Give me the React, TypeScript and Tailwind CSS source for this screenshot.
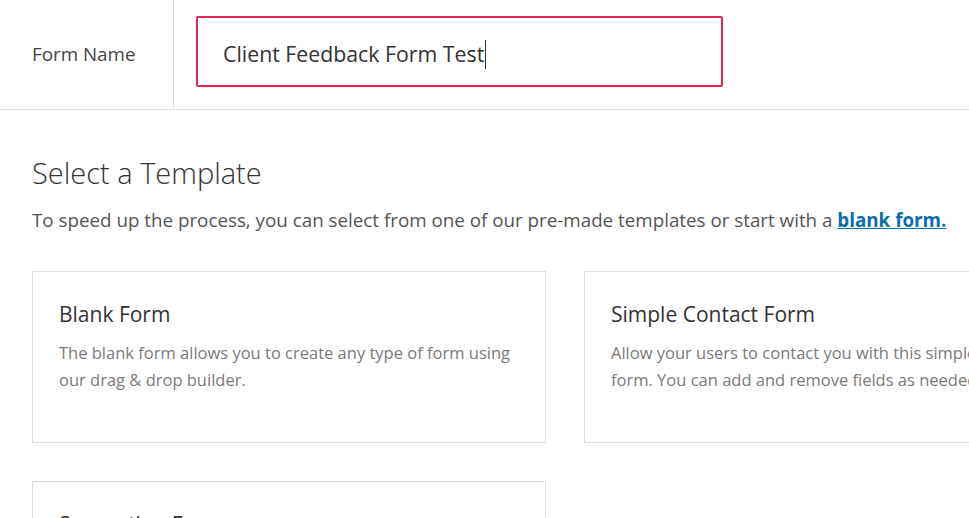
import React from "react";

interface Template {
  title: string;
  description: string;
}

const templates: Template[] = [
  {
    title: "Blank Form",
    description: "The blank form allows you to create any type of form using our drag & drop builder.",
  },
  {
    title: "Simple Contact Form",
    description:
      "Allow your users to contact you with this simple contact form. You can add and remove fields as needed.",
  },
  {
    title: "Suggestion Form",
    description: "Ask your users for suggestions with this simple form template.",
  },
];

const TemplateCard: React.FC<{ template: Template }> = ({ template }) => (
  <div className="h-[172px] border border-[#dddddd] bg-white px-[26px] pt-[27px]">
    <h3 className="text-[21px] leading-[30px] text-[#333333]">{template.title}</h3>
    <p className="mt-[10px] text-[16.5px] leading-[27px] text-[#7a7a7a]">{template.description}</p>
  </div>
);

export default function App() {
  return (
    <div
      className="h-screen w-full overflow-hidden bg-white"
      style={{ fontFamily: '"Open Sans", "Noto Sans", sans-serif' }}
    >
      {/* form name row */}
      <div className="flex h-[110px] border-b border-[#dcdcdc]">
        <div className="flex w-[174px] shrink-0 items-center border-r border-[#dcdcdc] pl-[32px]">
          <span className="text-[18.8px] text-[#444444]">Form Name</span>
        </div>
        <div className="flex items-start pl-[22px] pt-[16px]">
          <div className="flex h-[71px] w-[527px] items-center rounded-[2px] border-2 border-[#e3274f] pl-[25px] pt-[5px]">
            <span className="text-[21.3px] text-[#333333]">Client Feedback Form Test</span>
            <span className="ml-[1px] h-[29px] w-px bg-[#333333]" />
          </div>
        </div>
      </div>

      {/* templates */}
      <div className="px-[32px] pt-[44px]">
        <h2 className="text-[29px] font-light leading-[38px] text-[#333333]">Select a Template</h2>
        <p className="mt-[14px] whitespace-nowrap text-[18.8px] text-[#555555]">
          To speed up the process, you can select from one of our pre-made templates or start with a{" "}
          <a href="#" className="font-bold text-[#0b6eae] underline">
            blank form.
          </a>
        </p>
        <div className="mt-[37px] grid w-[1066px] grid-cols-[514px_514px] gap-[38px]">
          {templates.map((t) => (
            <TemplateCard key={t.title} template={t} />
          ))}
        </div>
      </div>
    </div>
  );
}
